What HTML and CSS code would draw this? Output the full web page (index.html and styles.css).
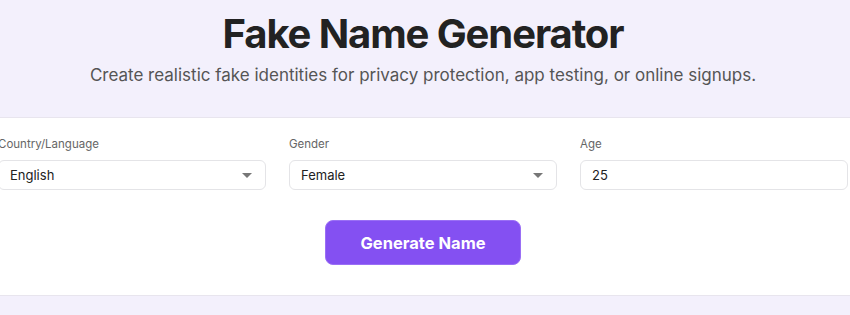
FILE: index.html
```html
<!DOCTYPE html>
<html lang="en">
<head>
    <meta charset="UTF-8">
    <meta name="viewport" content="width=device-width, initial-scale=1.0">
    <title>Fake Name Generator</title>
    <link rel="stylesheet" href="styles.css">
</head>
<body>
    <div class="page">
        <header class="hero">
            <h1>Fake Name Generator</h1>
            <p class="subtitle">Create realistic fake identities for privacy protection, app testing, or online signups.</p>
        </header>

        <section class="panel">
            <div class="fields">
                <div class="field">
                    <label for="country">Country/Language</label>
                    <div class="select-wrap">
                        <select id="country">
                            <option>English</option>
                        </select>
                    </div>
                </div>
                <div class="field">
                    <label for="gender">Gender</label>
                    <div class="select-wrap">
                        <select id="gender">
                            <option>Female</option>
                        </select>
                    </div>
                </div>
                <div class="field">
                    <label for="age">Age</label>
                    <input type="text" id="age" value="25">
                </div>
            </div>
            <div class="actions">
                <button class="generate-btn">Generate Name</button>
            </div>
        </section>
    </div>
</body>
</html>
```

FILE: styles.css
```css
* {
    box-sizing: border-box;
    margin: 0;
    padding: 0;
}

body {
    background: #f3f0fc;
    font-family: 'Inter', 'Liberation Sans', sans-serif;
    overflow: hidden;
}

.page {
    width: 850px;
}

.hero {
    text-align: center;
    height: 117px;
    padding: 12px 4px 0 0;
}

h1 {
    font-size: 40px;
    font-weight: 700;
    color: #222;
    line-height: 44px;
    letter-spacing: -1.1px;
}

.subtitle {
    margin-top: 8px;
    font-size: 17px;
    color: #555;
    line-height: 22px;
}

.panel {
    background: #fff;
    border-top: 1px solid #e8e5ee;
    border-bottom: 1px solid #e8e5ee;
    padding: 18px 0 30px;
}

.fields {
    display: grid;
    grid-template-columns: repeat(3, 268px);
    gap: 23px;
    width: 850px;
    margin-left: -2px;
}

.field label {
    display: block;
    font-size: 11.5px;
    color: #666;
    line-height: 16px;
    margin-bottom: 8px;
}

.select-wrap {
    position: relative;
}

.select-wrap::after {
    content: '';
    position: absolute;
    right: 14px;
    top: 13px;
    border-left: 5px solid transparent;
    border-right: 5px solid transparent;
    border-top: 5px solid #777;
    pointer-events: none;
}

select,
input {
    appearance: none;
    -webkit-appearance: none;
    width: 100%;
    height: 30px;
    border: 1px solid #e4e4e7;
    border-radius: 6px;
    background: #fff;
    padding: 0 11px;
    font-family: inherit;
    font-size: 13px;
    color: #222;
    outline: none;
}

.actions {
    display: flex;
    justify-content: center;
    margin-top: 30px;
    padding-right: 4px;
}

.generate-btn {
    width: 196px;
    height: 45px;
    background: #8450f2;
    border: 1px solid #9a6ff5;
    border-radius: 8px;
    color: #fff;
    font-family: inherit;
    font-size: 16.5px;
    font-weight: 700;
    cursor: pointer;
}
```
